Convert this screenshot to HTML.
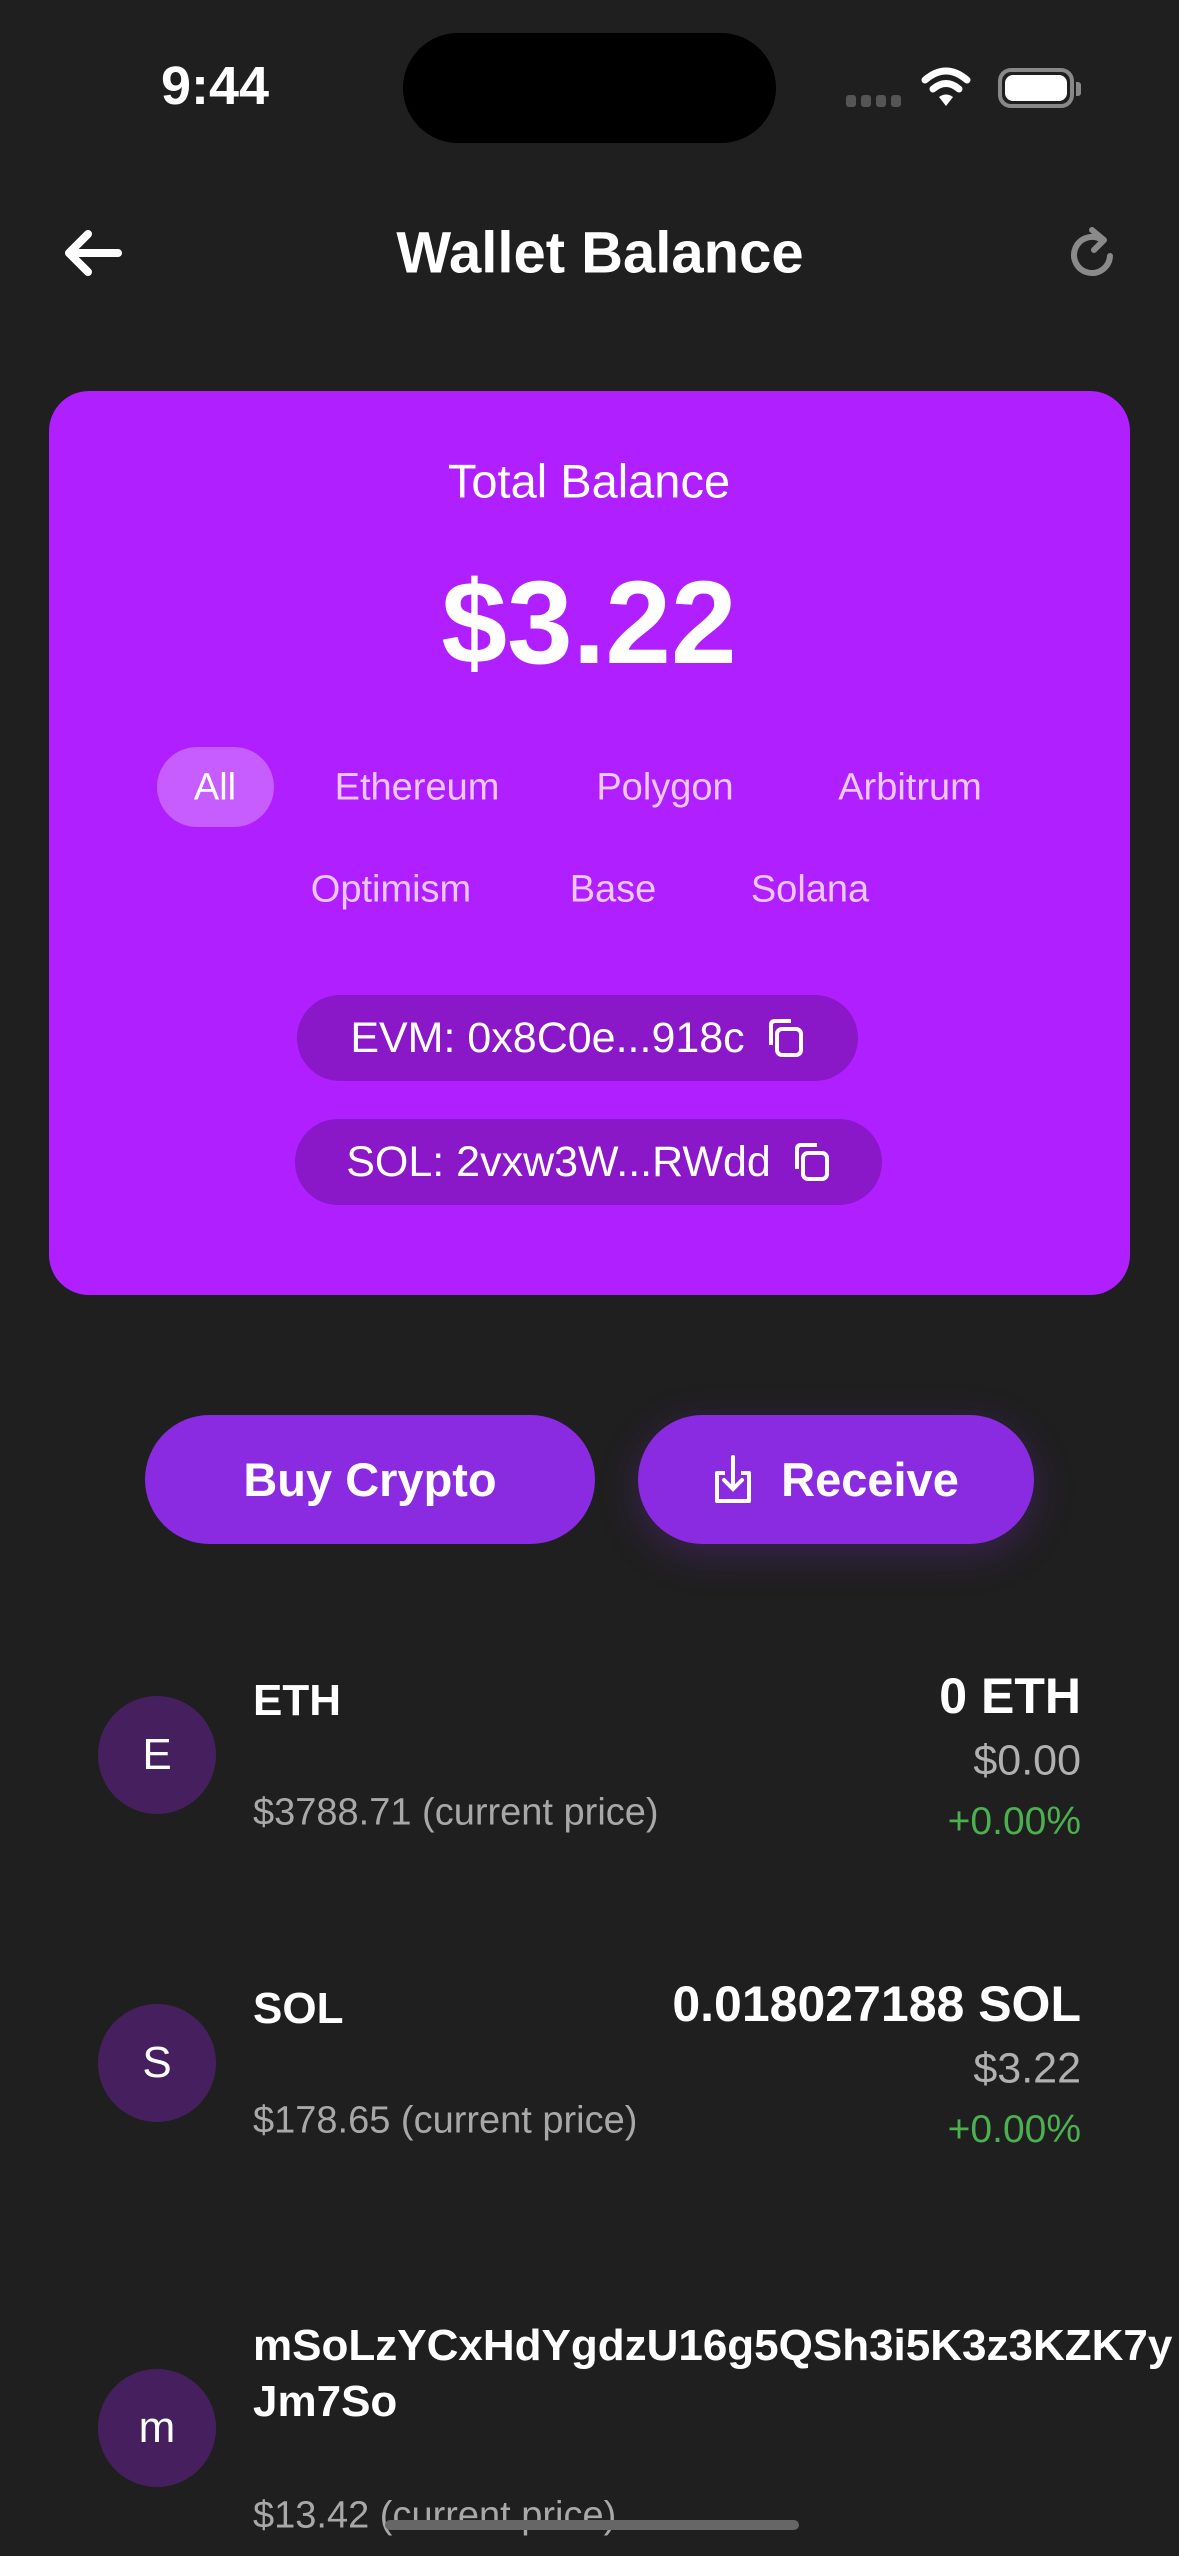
<!DOCTYPE html>
<html><head><meta charset="utf-8"><style>
*{margin:0;padding:0;box-sizing:border-box}
html,body{overflow:hidden}
body{width:1179px;height:2556px;background:#1f1f1f;font-family:"Liberation Sans",sans-serif;color:#fff;position:relative;overflow:hidden}
.a{position:absolute;white-space:nowrap}
.c{transform:translate(-50%,-50%)}
.r{transform:translateY(-50%);text-align:right}
.l{transform:translateY(-50%)}
.chip{font-size:38px;color:#ecc8ff}
.pill{position:absolute;background:#8a17c8;border-radius:44px;display:flex;align-items:center;justify-content:center;font-size:43px;color:#fff;gap:20px}
.btn{position:absolute;background:#8a2be2;border-radius:65px;display:flex;align-items:center;justify-content:center;font-size:47px;font-weight:bold;gap:28px}
.av{position:absolute;width:118px;height:118px;border-radius:50%;background:#46205e;display:flex;align-items:center;justify-content:center;font-size:44px}
.nm{font-size:44px;font-weight:bold}
.pr{font-size:38px;color:#a8a8a8}
.amt{font-size:50px;font-weight:bold}
.usd{font-size:43px;color:#b0b0b0}
.pct{font-size:39px;color:#4caf50}
</style></head><body>
<div class="a c" style="left:215px;top:86px;font-size:54px;font-weight:bold">9:44</div>
<div class="a" style="left:403px;top:33px;width:373px;height:110px;background:#000;border-radius:55px"></div>
<div class="a" style="left:846px;top:95px;width:60px;height:12px;display:flex;gap:5px"><span style="width:10px;height:12px;background:#555;border-radius:3px"></span><span style="width:10px;height:12px;background:#555;border-radius:3px"></span><span style="width:10px;height:12px;background:#555;border-radius:3px"></span><span style="width:10px;height:12px;background:#555;border-radius:3px"></span></div>
<svg class="a" style="left:921px;top:66px" width="50" height="42" viewBox="0 0 50 42"><path d="M4 14 Q25 -4 46 14" stroke="#fff" stroke-width="7" fill="none" stroke-linecap="round"/><path d="M12 23 Q25 12 38 23" stroke="#fff" stroke-width="7" fill="none" stroke-linecap="round"/><path d="M18 31 L25 40 L32 31 Q25 26 18 31Z" fill="#fff"/></svg>
<div class="a" style="left:998px;top:68px;width:76px;height:40px;border:4px solid #888;border-radius:13px"><div style="position:absolute;left:3px;top:3px;right:3px;bottom:3px;background:#fff;border-radius:8px"></div></div>
<div class="a" style="left:1076px;top:82px;width:5px;height:14px;background:#888;border-radius:0 3px 3px 0"></div>
<svg class="a" style="left:62px;top:228px" width="60" height="50" viewBox="0 0 60 50"><path d="M56 25 H8 M26 6 L7 25 L26 44" stroke="#fff" stroke-width="8" fill="none" stroke-linecap="round" stroke-linejoin="round"/></svg>
<div class="a c" style="left:600px;top:253px;font-size:58px;font-weight:bold">Wallet Balance</div>
<svg class="a" style="left:1068px;top:224px" width="52" height="56" viewBox="0 0 52 56"><path d="M34 16 A18 18 0 1 0 42 32" stroke="#8a8a8a" stroke-width="6" fill="none" stroke-linecap="round"/><path d="M24 6 L36 16 L26 26" stroke="#8a8a8a" stroke-width="6" fill="none" stroke-linecap="round" stroke-linejoin="round"/></svg>
<div class="a" style="left:49px;top:391px;width:1081px;height:904px;background:#af1fff;border-radius:40px"></div>
<div class="a c" style="left:589px;top:481px;font-size:47px">Total Balance</div>
<div class="a c" style="left:589px;top:623px;font-size:118px;font-weight:bold">$3.22</div>
<div class="a" style="left:157px;top:747px;width:117px;height:80px;background:#c75cff;border-radius:40px"></div>
<div class="a c chip" style="left:215px;top:788px;color:#fff">All</div>
<div class="a c chip" style="left:417px;top:788px">Ethereum</div>
<div class="a c chip" style="left:665px;top:788px">Polygon</div>
<div class="a c chip" style="left:910px;top:788px">Arbitrum</div>
<div class="a c chip" style="left:391px;top:890px">Optimism</div>
<div class="a c chip" style="left:613px;top:890px">Base</div>
<div class="a c chip" style="left:810px;top:890px">Solana</div>
<div class="pill" style="left:297px;top:995px;width:561px;height:86px">EVM: 0x8C0e...918c <svg width="40" height="42" viewBox="0 0 40 42"><rect x="12" y="12" width="24" height="26" rx="5" stroke="#fff" stroke-width="4" fill="none"/><path d="M6 28 V8 Q6 4 10 4 H26" stroke="#fff" stroke-width="4" fill="none"/></svg></div>
<div class="pill" style="left:295px;top:1119px;width:587px;height:86px">SOL: 2vxw3W...RWdd <svg width="40" height="42" viewBox="0 0 40 42"><rect x="12" y="12" width="24" height="26" rx="5" stroke="#fff" stroke-width="4" fill="none"/><path d="M6 28 V8 Q6 4 10 4 H26" stroke="#fff" stroke-width="4" fill="none"/></svg></div>
<div class="btn" style="left:145px;top:1415px;width:450px;height:129px">Buy Crypto</div>
<div class="btn" style="left:638px;top:1415px;width:396px;height:129px;box-shadow:0 10px 40px rgba(138,43,226,.25)"><svg width="40" height="50" viewBox="0 0 40 50"><path d="M12 18 H4 V46 H36 V18 H28" stroke="#fff" stroke-width="4" fill="none" stroke-linejoin="round"/><path d="M20 2 V34 M11 25 L20 34 L29 25" stroke="#fff" stroke-width="4" fill="none" stroke-linecap="round"/></svg>Receive</div>

<div class="av" style="left:98px;top:1696px">E</div>
<div class="a l nm" style="left:253px;top:1701px">ETH</div>
<div class="a l pr" style="left:253px;top:1813px">$3788.71 (current price)</div>
<div class="a r amt" style="right:98px;top:1696px">0 ETH</div>
<div class="a r usd" style="right:98px;top:1761px">$0.00</div>
<div class="a r pct" style="right:98px;top:1822px">+0.00%</div>

<div class="av" style="left:98px;top:2004px">S</div>
<div class="a l nm" style="left:253px;top:2009px">SOL</div>
<div class="a l pr" style="left:253px;top:2121px">$178.65 (current price)</div>
<div class="a r amt" style="right:98px;top:2004px">0.018027188 SOL</div>
<div class="a r usd" style="right:98px;top:2069px">$3.22</div>
<div class="a r pct" style="right:98px;top:2130px">+0.00%</div>

<div class="av" style="left:98px;top:2369px">m</div>
<div class="a nm" style="left:253px;top:2318px;width:926px;overflow:hidden;line-height:56px">mSoLzYCxHdYgdzU16g5QSh3i5K3z3KZK7y<br>Jm7So</div>
<div class="a l pr" style="left:253px;top:2516px">$13.42 (current price)</div>
<div class="a" style="left:385px;top:2520px;width:414px;height:10px;background:#666;border-radius:5px"></div>
</body></html>
